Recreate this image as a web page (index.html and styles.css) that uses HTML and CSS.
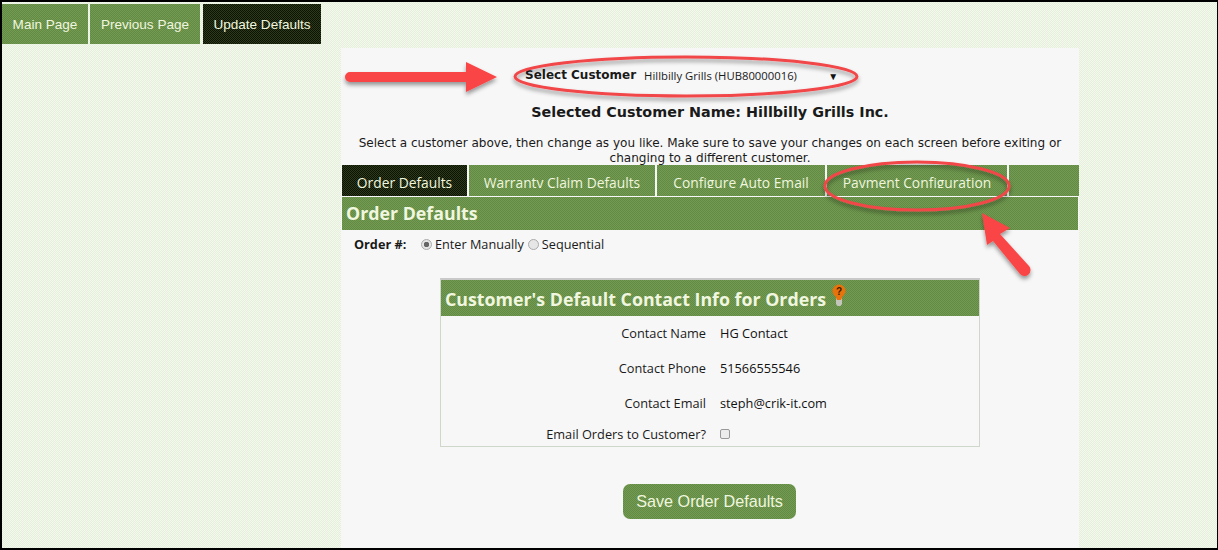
FILE: index.html
```html
<!DOCTYPE html>
<html lang="en">
<head>
<meta charset="utf-8">
<title>Update Defaults</title>
<link rel="stylesheet" href="styles.css">
</head>
<body>
<div class="frame">
  <nav class="topnav">
    <a class="navbtn">Main Page</a>
    <a class="navbtn">Previous Page</a>
    <a class="navbtn active">Update Defaults</a>
  </nav>
  <main class="panel">
    <div class="customer-select">
      <label class="select-label">Select Customer</label>
      <span class="select-box"><span>Hillbilly Grills (HUB80000016)</span><span class="select-arrow">▼</span></span>
    </div>
    <h2 class="customer-name">Selected Customer Name: Hillbilly Grills Inc.</h2>
    <p class="intro">Select a customer above, then change as you like. Make sure to save your changes on each screen before exiting or changing to a different customer.</p>
    <div class="tabs">
      <a class="tab current"><span class="tab-text">Order Defaults</span></a>
      <a class="tab"><span class="tab-text">Warranty Claim Defaults</span></a>
      <a class="tab"><span class="tab-text">Configure Auto Email</span></a>
      <a class="tab"><span class="tab-text">Payment Configuration</span></a>
    </div>
    <h3 class="section-title">Order Defaults</h3>
    <div class="order-row">
      <strong class="order-label">Order #:</strong>
      <label class="radio"><input type="radio" name="o" checked>Enter Manually</label>
      <label class="radio"><input type="radio" name="o">Sequential</label>
    </div>
    <section class="contact">
      <header class="contact-head">Customer's Default Contact Info for Orders
        <svg class="bulb" width="16" height="24" viewBox="0 0 16 24"><path d="M5 15h6v6l-1.500 2h-3L5 21z" fill="#c4c6bc"/><circle cx="8" cy="8" r="6.500" fill="#e8730c"/><path d="M4.500 13.500L6 17h4l1.500-3.500z" fill="#e8730c"/><text x="8" y="12" class="bulb-q">?</text></svg>
      </header>
      <div class="contact-row"><span class="contact-key">Contact Name</span><span class="contact-val">HG Contact</span></div>
      <div class="contact-row"><span class="contact-key">Contact Phone</span><span class="contact-val">51566555546</span></div>
      <div class="contact-row"><span class="contact-key">Contact Email</span><span class="contact-val">steph@crik-it.com</span></div>
      <div class="contact-row last"><span class="contact-key">Email Orders to Customer?</span><span class="contact-val"><input type="checkbox" class="check"></span></div>
    </section>
    <div class="save-wrap"><button class="save">Save Order Defaults</button></div>
  </main>
  <svg class="marks" width="1218" height="550" viewBox="0 0 1218 550" aria-hidden="true">
    <defs><filter id="sh" x="-10%" y="-30%" width="120%" height="170%"><feDropShadow dx="0" dy="3" stdDeviation="2" flood-color="#000" flood-opacity=".4"/></filter></defs>
    <g filter="url(#sh)">
      <path d="M350 72h116v-10l31 15-31 15v-10H350a5 5 0 0 1 0-10z" fill="#f94545"/>
      <ellipse cx="686" cy="76.500" rx="171" ry="19.500" class="ring"/>
      <ellipse cx="917" cy="186" rx="92" ry="24" class="ring"/>
      <path d="M982 213l28 15-10 6 29 32a6 6 0 0 1-9 8l-27-33-6 4z" fill="#f94545"/>
    </g>
  </svg>
</div>
</body>
</html>
```
FILE: styles.css
```css
* { box-sizing: border-box; }
html, body { margin: 0; height: 100%; }
body { background: #eef3e7; overflow: hidden; }
.frame {
  width: 1218px; height: 550px; position: relative;
  border: solid #000; border-width: 2px 1px 2px 2px;
  background: repeating-conic-gradient(#e4f0da 0 25%, #f4f8ee 0 50%) 0 0 / 2px 2px;
  overflow: hidden;
  font-family: "Open Sans", "Noto Sans", sans-serif; color: #1a1a1a;
}
.topnav { display: flex; padding-top: 2px; height: 46px; }
.navbtn {
  height: 40px; display: flex; align-items: center; justify-content: center; white-space: nowrap;
  background: repeating-conic-gradient(#5f8d3c 0 25%, #76985a 0 50%) 0 0 / 2px 2px;
  color: #f0f6df; font: 13.550px "Liberation Sans", sans-serif;
}
.navbtn:nth-child(1) { width: 86px; margin-right: 2px; }
.navbtn:nth-child(2) { width: 110px; margin-right: 3px; }
.navbtn:nth-child(3) { width: 118px; }
.navbtn.active { background: repeating-conic-gradient(#0c1206 0 25%, #2c3a18 0 50%) 0 0 / 2px 2px; }
.panel { margin-left: 339px; width: 738px; height: 500px; background: #f7f7f7; text-align: center; }
.customer-select { height: 53px; padding: 18px 0 0 184px; display: flex; align-items: flex-start; }
.select-label { font: bold 12px/18px "DejaVu Sans", sans-serif; white-space: nowrap; }
.select-box { margin-left: 8px; width: 196px; display: flex; justify-content: space-between; font: 11.300px/20px "Open Sans", sans-serif; }
.select-arrow { font-size: 10px; margin-right: 2px; color: #111; }
.customer-name { margin: 0; height: 35px; font: bold 14.350px/22px "DejaVu Sans", sans-serif; }
.intro { margin: 0; height: 29px; padding: 0 8px; font: 12.050px/15px "DejaVu Sans", sans-serif; }
.tabs {
  display: flex; height: 32px; margin-left: 1px; width: 737px;
  background: repeating-conic-gradient(#5f8d3c 0 25%, #76985a 0 50%) 0 0 / 2px 2px;
  border-bottom: 1px solid #f7f7f7;
}
.tab {
  display: flex; justify-content: center; color: #f0f6df; font-size: 13.800px;
  border-right: 2px solid #f7f7f7;
}
.tab-text { display: block; height: 15px; margin-top: 8px; line-height: 20px; overflow: hidden; }
.tab:nth-child(1) { width: 127px; background: repeating-conic-gradient(#0c1206 0 25%, #2c3a18 0 50%) 0 0 / 2px 2px; }
.tab:nth-child(2) { width: 188px; }
.tab:nth-child(3) { width: 170px; }
.tab:nth-child(4) { width: 182px; }
.section-title {
  margin: 0 0 0 1px; height: 33px; width: 736px; padding-left: 4px; text-align: left;
  background: repeating-conic-gradient(#5f8d3c 0 25%, #76985a 0 50%) 0 0 / 2px 2px;
  color: #f0f6df; font: bold 17.800px/33px "Open Sans", sans-serif;
}
.order-row { display: flex; align-items: center; height: 28px; padding-left: 13px; font-size: 12.700px; }
.order-label { width: 67px; text-align: left; }
.radio { display: flex; align-items: center; margin-right: 4px; }
.radio input {
  appearance: none; width: 11px; height: 11px; margin: 0 3px 0 0; border-radius: 50%;
  border: 1px solid #aaa; background: #e6e6e6;
}
.radio input:checked { background: radial-gradient(circle, #666 0 2.500px, #e6e6e6 3px); }
.contact { width: 540px; height: 169px; margin: 20px 0 0 99px; border: 1px solid #cfd6ca; border-top: 2px solid #c9c9c9; }
.contact-head {
  height: 36px; display: flex; align-items: center; gap: 5px; padding-left: 4px; padding-top: 2px; white-space: nowrap;
  background: repeating-conic-gradient(#5f8d3c 0 25%, #76985a 0 50%) 0 0 / 2px 2px;
  color: #f0f6df; font: bold 17.800px "Open Sans", sans-serif;
}
.bulb { margin-bottom: 8px; }
.bulb-q { font: bold 10px "Liberation Sans", sans-serif; text-anchor: middle; fill: #3a1e00; }
.contact-row { display: flex; height: 35px; align-items: center; font-size: 12.750px; padding-bottom: 1px; }
.contact-row.last { height: 26px; }
.contact-key { width: 265px; text-align: right; }
.contact-val { margin-left: 14px; display: flex; align-items: center; color: #111; }
.check {
  appearance: none; width: 10px; height: 10px; margin: 0; border: 1px solid #999; border-radius: 2px; background: #ececec;
}
.save-wrap { padding-top: 37px; }
.save {
  display: block; width: 173px; height: 35px; margin-left: 282px; border: 0; border-radius: 7px;
  background: repeating-conic-gradient(#5f8d3c 0 25%, #76985a 0 50%) 0 0 / 2px 2px;
  color: #f0f6df; font: 16.200px "Liberation Sans", sans-serif;
}
.marks { position: absolute; left: -2px; top: -2px; pointer-events: none; }
.ring { fill: none; stroke: #f2464a; stroke-width: 3; }
```
